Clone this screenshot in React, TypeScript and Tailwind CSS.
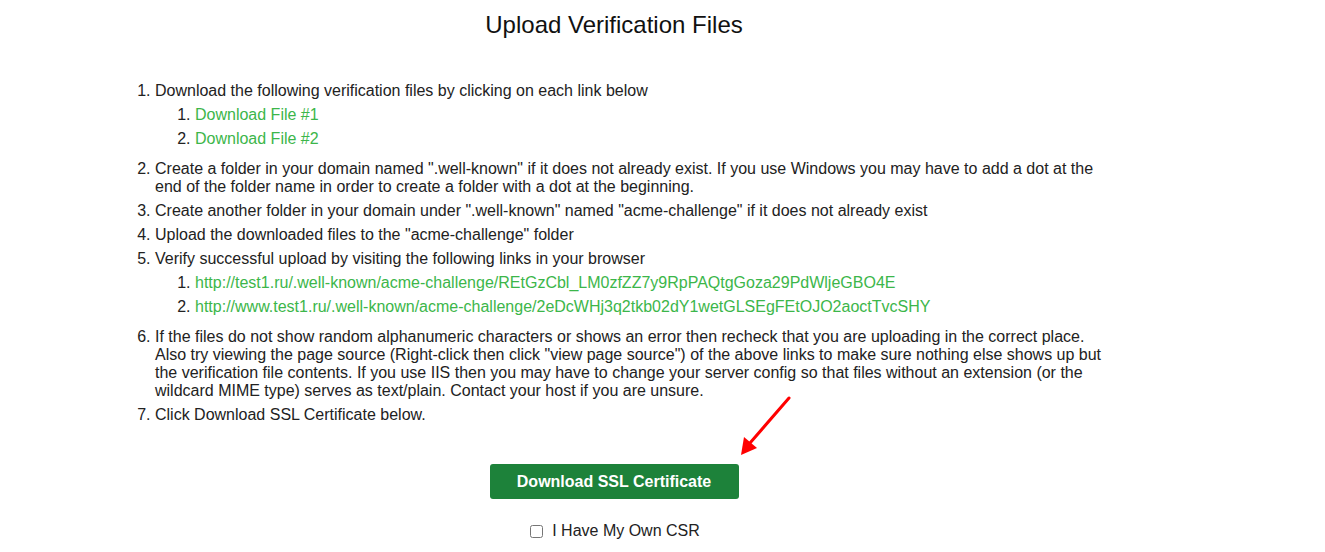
import React from 'react';

// Verification steps page
const linkCls = 'text-[#3cb64a] hover:underline';

export default function App() {
  return (
    <div className="relative min-h-[552px] bg-white text-[16px] text-[#222] font-['Liberation_Sans',Arial,sans-serif]">
      <div className="ml-[115px] w-[1000px] pt-[12px]">
        {/* Heading */}
        <h2 className="text-center text-[24px] leading-[26px] text-[#111] -translate-x-px">Upload Verification Files</h2>

        {/* Steps */}
        <ol className="list-decimal pl-[40px] mt-[44px] leading-[18px]">
          <li className="mb-[6px]">
            Download the following verification files by clicking on each link below
            <ol className="flow-root list-decimal pl-[40px] mt-[6px]">
              <li className="mb-[6px]"><a href="#" className={linkCls}>Download File #1</a></li>
              <li className="mb-[6px]"><a href="#" className={linkCls}>Download File #2</a></li>
            </ol>
          </li>
          <li className="mb-[6px]">
            Create a folder in your domain named ".well-known" if it does not already exist. If you use Windows you may have to add a dot at the end of the folder name in order to create a folder with a dot at the beginning.
          </li>
          <li className="mb-[6px]">
            Create another folder in your domain under ".well-known" named "acme-challenge" if it does not already exist
          </li>
          <li className="mb-[6px]">Upload the downloaded files to the "acme-challenge" folder</li>
          <li className="mb-[6px]">
            Verify successful upload by visiting the following links in your browser
            <ol className="flow-root list-decimal pl-[40px] mt-[6px]">
              <li className="mb-[6px]">
                <a href="#" className={linkCls}>http://test1.ru/.well-known/acme-challenge/REtGzCbl_LM0zfZZ7y9RpPAQtgGoza29PdWljeGBO4E</a>
              </li>
              <li className="mb-[6px]">
                <a href="#" className={linkCls}>http://www.test1.ru/.well-known/acme-challenge/2eDcWHj3q2tkb02dY1wetGLSEgFEtOJO2aoctTvcSHY</a>
              </li>
            </ol>
          </li>
          <li className="mb-[6px]">
            If the files do not show random alphanumeric characters or shows an error then recheck that you are uploading in the correct place. Also try viewing the page source (Right-click then click "view page source") of the above links to make sure nothing else shows up but the verification file contents. If you use IIS then you may have to change your server config so that files without an extension (or the wildcard MIME type) serves as text/plain. Contact your host if you are unsure.
          </li>
          <li className="mb-[6px]">Click Download SSL Certificate below.</li>
        </ol>

        {/* Action */}
        <div className="flex flex-col items-center mt-[40px] -translate-x-px">
          <button className="w-[249px] h-[35px] rounded-[3px] bg-[#1d823a] text-white font-bold text-[16px]">
            Download SSL Certificate
          </button>
          <label className="flex items-center gap-[9px] mt-[20px] text-[16px] text-[#222] translate-x-[1px]">
            <input type="checkbox" className="w-[13px] h-[13px]" />
            I Have My Own CSR
          </label>
        </div>
      </div>

      {/* Red annotation arrow */}
      <svg className="absolute left-0 top-0 pointer-events-none" width="1325" height="552">
        <line x1="789" y1="398" x2="750" y2="443" stroke="#ff0000" strokeWidth="3" strokeLinecap="round" />
        <polygon points="741,455 744,437 757,448" fill="#ff0000" />
      </svg>
    </div>
  );
}
